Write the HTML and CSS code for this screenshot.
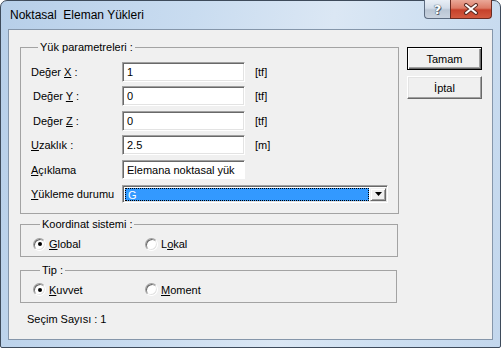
FILE: index.html
```html
<!DOCTYPE html>
<html lang="tr">
<head>
    <meta charset="UTF-8">
    <title>Noktasal Eleman Yükleri</title>
    <link rel="stylesheet" href="styles.css">
</head>
<body>
    <div class="window">
        <div class="titlebar">
            <span class="title">Noktasal  Eleman Yükleri</span>
            <div class="caption">
                <span class="cap help">?</span>
                <span class="cap close">
                    <svg width="16" height="12" viewBox="0 0 16 12">
                        <path d="M3 2 L13 10 M13 2 L3 10" stroke="#5a2a22" stroke-width="4" stroke-linecap="round"/>
                        <path d="M3 2 L13 10 M13 2 L3 10" stroke="#fff" stroke-width="2" stroke-linecap="round"/>
                    </svg>
                </span>
            </div>
        </div>
        <div class="client">
            <div class="main">
                <fieldset class="group params">
                    <legend>Yük parametreleri :</legend>
                    <div class="form-grid">
                        <label>Değer <u>X</u> :</label>
                        <input class="field" type="text" value="1">
                        <span class="unit">[tf]</span>

                        <label class="nudge">Değer <u>Y</u> :</label>
                        <input class="field" type="text" value="0">
                        <span class="unit">[tf]</span>

                        <label class="nudge">Değer <u>Z</u> :</label>
                        <input class="field" type="text" value="0">
                        <span class="unit">[tf]</span>

                        <label><u>U</u>zaklık :</label>
                        <input class="field" type="text" value="2.5">
                        <span class="unit">[m]</span>

                        <label><u>A</u>çıklama</label>
                        <input class="field flat" type="text" value="Elemana noktasal yük">
                        <span></span>

                        <label><u>Y</u>ükleme durumu</label>
                        <div class="combo">
                            <span class="combo-value">G</span>
                            <span class="combo-btn">
                                <svg width="7" height="4" viewBox="0 0 7 4"><path d="M0 0 H7 L3.5 4 Z" fill="#000"/></svg>
                            </span>
                        </div>
                    </div>
                </fieldset>

                <fieldset class="group opts first">
                    <legend>Koordinat sistemi :</legend>
                    <div class="radios">
                        <span class="radio on"><i></i><span><u>G</u>lobal</span></span>
                        <span class="radio"><i></i><span>L<u>o</u>kal</span></span>
                    </div>
                </fieldset>

                <fieldset class="group opts second">
                    <legend>Tip :</legend>
                    <div class="radios">
                        <span class="radio on"><i></i><span><u>K</u>uvvet</span></span>
                        <span class="radio"><i></i><span><u>M</u>oment</span></span>
                    </div>
                </fieldset>

                <div class="count">Seçim Sayısı : 1</div>
            </div>
            <div class="side">
                <button class="btn default">Tamam</button>
                <button class="btn">İptal</button>
            </div>
        </div>
    </div>
</body>
</html>
```

FILE: styles.css
```css
*{margin:0;padding:0;box-sizing:border-box;}
body{width:501px;height:348px;overflow:hidden;background:#fff;font-family:"Liberation Sans",Arial,sans-serif;font-size:11px;color:#000;}
u{text-underline-offset:1px;}

/* window frame */
.window{width:501px;height:348px;border:1px solid #3e4b5b;border-radius:7px 7px 2px 2px;background:linear-gradient(100deg,#b7cfe9 0%,#c9dcf0 35%,#dbe7f4 60%,#cddff1 80%,#c3d7ed 100%);display:flex;flex-direction:column;}
.titlebar{height:28px;display:flex;align-items:flex-start;justify-content:space-between;padding-left:9px;}
.title{font-size:12px;line-height:12px;margin-top:8px;white-space:pre;color:#000;}
.caption{display:flex;margin-top:-1px;margin-right:8px;}
.cap{height:19px;display:flex;align-items:center;justify-content:center;border:1px solid #5d6c80;border-top:none;}
.help{width:26px;border-right:none;border-radius:0 0 0 4px;background:linear-gradient(#e9eff6 0%,#d3dde9 45%,#bac6d4 55%,#c9d3df 100%);font-family:"DejaVu Sans",sans-serif;font-weight:bold;font-size:13px;color:#fff;text-shadow:0 0 1px #44505e,0 0 1px #44505e,1px 1px 0 #5a6676;}
.close{width:42px;border-color:#6b2b22;border-radius:0 0 4px 0;background:linear-gradient(#eaa898 0%,#dc7b66 45%,#c6412b 55%,#d35a40 100%);}

.client{flex:1;margin:0 7px 7px 7px;border:1px solid #8596aa;background:#f0f0f0;display:flex;}
.main{width:389px;padding:11px 0 0 11px;display:flex;flex-direction:column;}

/* group boxes */
.group{border:1px solid #a3a3a3;width:378px;}
.group legend{margin-left:7px;padding:0 2px;line-height:13px;}
.params{padding:8px 10px 9px 10px;}
.form-grid{display:grid;grid-template-columns:91px 123px auto;grid-auto-rows:20px;row-gap:4.4px;align-items:center;}
.form-grid .nudge{padding-left:2px;}
.unit{padding-left:10px;}
.field{height:20px;width:123px;font:inherit;color:#000;background:#fff;padding:0 4px;outline:none;border:1px solid;border-color:#a0a0a0 #fff #fff #a0a0a0;box-shadow:inset 1px 1px #696969,inset -1px -1px #e3e3e3;}
.field.flat{height:19px;box-shadow:inset 1px 1px #696969;}

.combo{grid-column:2 / 4;width:266px;height:18px;display:flex;border:1px solid;border-color:#a0a0a0 #fff #fff #a0a0a0;box-shadow:inset 1px 1px #696969,inset -1px -1px #e3e3e3;background:#fff;padding:2px 1px 1px 2px;}
.combo-value{flex:1;background:#3399ff;color:#fff;border:1px dotted #000;line-height:12px;padding-left:2px;}
.combo-btn{width:16px;margin-left:1px;display:flex;align-items:center;justify-content:center;background:#f0f0f0;border:1px solid;border-color:#f0f0f0 #696969 #696969 #f0f0f0;box-shadow:inset 1px 1px #fff,inset -1px -1px #a0a0a0;}

.opts{padding:6px 12px 5px 12px;}
.opts.first{margin-top:4.5px;}
.opts.second{margin-top:6.5px;width:377px;}
.radios{display:grid;grid-template-columns:112px auto;height:14px;align-items:center;}
.radio{display:flex;align-items:center;gap:3px;}
.radio i{width:13px;height:13px;border-radius:50%;background:#fff;border:1px solid;border-color:#a0a0a0 #fff #fff #a0a0a0;box-shadow:inset 1px 1px #696969,inset -1px -1px #e3e3e3;display:flex;align-items:center;justify-content:center;}
.radio.on i::after{content:"";width:4px;height:4px;border-radius:50%;background:#000;}

.count{margin:10px 0 0 7px;line-height:13px;}

/* buttons */
.side{padding:17px 0 0 9px;display:flex;flex-direction:column;gap:6px;}
.btn{width:75px;height:23px;font:inherit;color:#000;background:#f0f0f0;border:1px solid;border-color:#fff #696969 #696969 #fff;box-shadow:inset -1px -1px #a0a0a0,inset 1px 1px #e3e3e3;}
.btn.default{border:1px solid #000;box-shadow:inset 1px 1px #fff,inset -1px -1px #696969,inset -2px -2px #a0a0a0;}
```
